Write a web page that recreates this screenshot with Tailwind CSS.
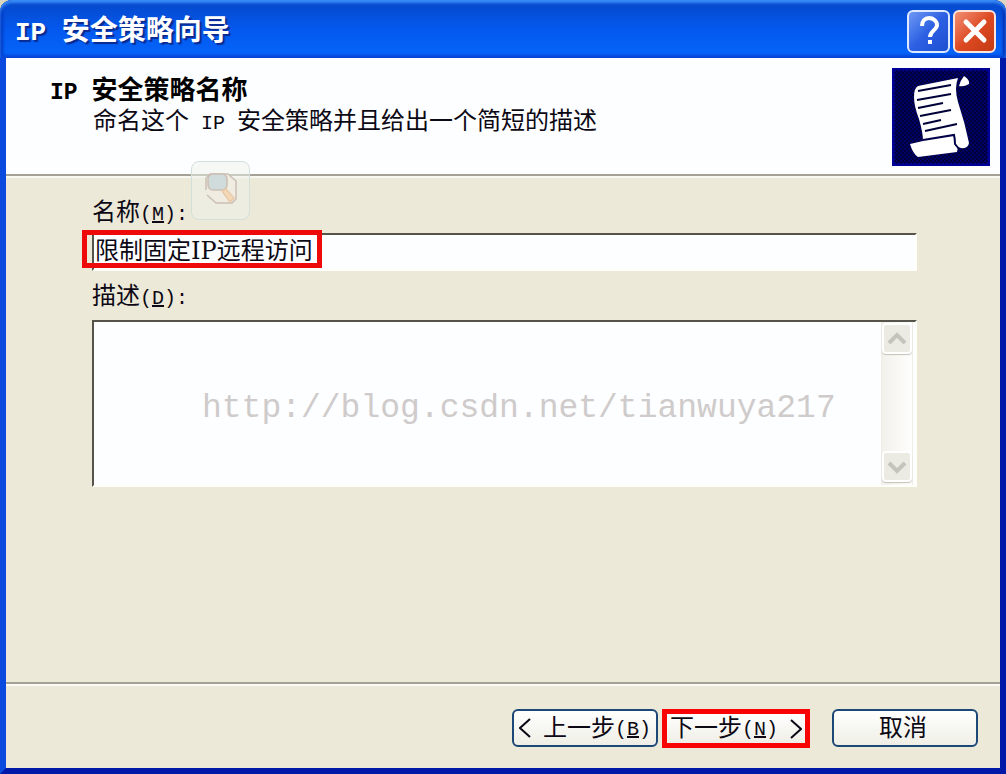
<!DOCTYPE html>
<html lang="zh-CN">
<head>
<meta charset="utf-8">
<meta name="viewport" content="width=device-width, initial-scale=1">
<title>IP 安全策略向导</title>
<script src="https://cdn.jsdelivr.net/npm/@tailwindcss/browser@4"></script>
</head>
<body class="bg-[#dcd8c0]">
<main class="flex min-h-screen flex-col font-['Liberation_Mono','Noto_Sans_CJK_SC',monospace] text-2xl leading-8 text-[#0c0814]">

  <!-- Title bar -->
  <header class="flex h-[58px] items-center justify-between rounded-t-xl bg-linear-to-b from-[#0548c8] via-[#0458ee] to-[#0566fb] pr-[10px] pl-[15px] shadow-[inset_0_3px_3px_#3a8cf8,inset_0_-3px_3px_#0446d8,inset_3px_0_3px_#0438c0,inset_-3px_0_3px_#0428a8]">
    <h1 class="pt-2 text-[28px] leading-8 font-bold whitespace-nowrap text-white [text-shadow:2px_2px_1px_#0a2a90]"><span class="text-[26px]">IP </span>安全策略向导</h1>
    <div class="flex gap-[3px] pt-1">
      <button type="button" aria-label="帮助" class="flex size-[43px] items-center justify-center rounded-md border-2 border-[#dfe9ff] bg-linear-to-br from-[#6f98f4] via-[#2c5fe2] to-[#1c50d0]">
        <svg class="size-9 shrink-0" viewBox="0 0 36 36" fill="none" stroke="#fff" stroke-width="4"><path d="M11 13c0-5 3-8 7-8s8 3 8 7c0 5-7 6-7 12"/><path d="M17 27h4v4h-4z" fill="#fff" stroke="none"/></svg>
      </button>
      <button type="button" aria-label="关闭" class="flex size-[43px] items-center justify-center rounded-md border-2 border-[#ffe4dc] bg-linear-to-br from-[#f08e72] via-[#dd4a22] to-[#c43a14]">
        <svg class="size-9 shrink-0" viewBox="0 0 36 36" fill="none" stroke="#fff" stroke-width="5" stroke-linecap="round"><path d="M9 9l18 18M27 9L9 27"/></svg>
      </button>
    </div>
  </header>

  <div class="relative flex flex-1 flex-col border-x-[6px] border-b-[6px] border-r-[#0018a8] border-b-[#0018a8] border-l-[#0a4ade] bg-[#ece9d8]">
    <!-- Page heading -->
    <section class="flex h-[118px] items-start justify-between border-b-2 border-[#a5a295] bg-[#fdfeff] pt-[10px] pr-[10px] pl-11 shadow-[0_2px_0_#f8f7f0]">
      <div class="pt-[9px] whitespace-nowrap">
        <h2 class="text-[26px] leading-[30px] font-bold text-black"><span class="text-[23px]">IP </span>安全策略名称</h2>
        <p class="pl-[43px] leading-[30px]">命名这个<span class="text-xl"> IP </span>安全策略并且给出一个简短的描述</p>
      </div>
      <svg class="size-[98px]" viewBox="0 0 98 98">
        <defs><pattern id="dots" width="4" height="4" patternUnits="userSpaceOnUse"><rect width="4" height="4" fill="#000038"/><path d="M0 0h2v2H0zM2 2h2v2H2z" fill="#000068"/></pattern></defs>
        <rect width="98" height="98" fill="url(#dots)"/>
        <path d="M1 1h96v96H1z" fill="none" stroke="#000098" stroke-width="3"/>
        <path d="M26 18L66 10Q62 20 66 34Q73 55 77 75Q76 81 69 80L66 79L65 84L26 89Q21 86 18 76L31 73Q31 65 27 51Q22 38 22 29Q22 20 26 18Z" fill="#fff"/>
        <path d="M72 8Q78 12 77 16Q72 19 67 18Q68 13 72 8Z" fill="#fff"/>
        <path d="M31 72L62 67Q63 71 63 76L67 81" fill="none" stroke="#000048" stroke-width="2"/>
        <path d="M26 23L59 17M25 32L59 26M26 40L51 35M28 48L59 42M31 56L49 52M33 63L65 56" stroke="#000038" stroke-width="2"/>
      </svg>
    </section>

    <!-- Form -->
    <form id="policy" class="flex flex-1 flex-col pt-[22px] pr-[83px] pl-[86px]">
      <label for="name" class="self-start whitespace-nowrap">名称<span class="text-xl">(<u>M</u>):</span></label>
      <div class="relative mt-[3px]">
        <input id="name" type="text" value="限制固定IP远程访问" class="block h-[38px] w-full border-2 border-t-[#55534a] border-r-[#fffffa] border-b-[#fffffa] border-l-[#55534a] bg-[#fdfeff] px-px pb-2 font-['DejaVu_Serif','Noto_Sans_CJK_SC',serif] text-2xl leading-6 outline-none">
        <span class="pointer-events-none absolute -top-[3px] -left-[10px] h-[38px] w-[240px] border-[5px] border-[#ee0a0a]"></span>
      </div>
      <label for="desc" class="mt-[11px] self-start whitespace-nowrap">描述<span class="text-xl">(<u>D</u>):</span></label>
      <div class="relative mt-[6px] flex h-[167px] border-2 border-t-[#55534a] border-r-[#fffffa] border-b-[#fffffa] border-l-[#55534a] bg-[#fdfeff]">
        <textarea id="desc" class="block min-w-0 flex-1 resize-none outline-none"></textarea>
        <div class="mr-[2px] flex w-8 flex-col justify-between border-x border-[#eeede6] bg-linear-to-r from-[#f2f1ec] to-[#fefefc] pt-px pb-[3px]">
          <button type="button" aria-label="向上滚动" class="flex h-[31px] items-center justify-center rounded-sm border-2 border-white bg-[#ebeae3] shadow-[0_1px_1px_#c4c3b8]"><svg class="size-5" viewBox="0 0 20 20" fill="none" stroke="#c4c3bc" stroke-width="4"><path d="M2 14l8-8 8 8"/></svg></button>
          <button type="button" aria-label="向下滚动" class="flex h-[31px] items-center justify-center rounded-sm border-2 border-white bg-[#ebeae3] shadow-[0_1px_1px_#c4c3b8]"><svg class="size-5" viewBox="0 0 20 20" fill="none" stroke="#c4c3bc" stroke-width="4"><path d="M2 6l8 8 8-8"/></svg></button>
        </div>
        <span class="pointer-events-none absolute top-[67px] left-[108px] text-[33px] leading-10 whitespace-nowrap text-[#cfcbcb]">http://blog.csdn.net/tianwuya217</span>
      </div>
    </form>

    <!-- Floating search badge -->
    <div class="absolute top-[103px] left-[185px] flex size-[59px] items-center justify-center rounded-lg border border-[#d2e0dc] bg-[#eef2ec]/50">
      <svg class="mb-1 size-9" viewBox="0 0 36 36" fill="none" stroke="#cbbfb4" stroke-width="1.5" stroke-linejoin="round"><path d="M3 19V7l4-4h18l8 7v18l-4 4H13l-9-8" fill="#f0ece2"/><rect x="5" y="3" width="19" height="16" rx="5" fill="#d0dcdc"/><path d="M19 20l4-2 8 9-4 4z" fill="#f4d8b8" stroke="#e6cba8"/></svg>
    </div>

    <!-- Wizard buttons -->
    <footer class="flex h-[86px] items-start justify-end border-t-2 border-[#a5a295] pt-[25px] pr-[22px] whitespace-nowrap shadow-[inset_0_2px_0_#fbfaf4]">
      <button type="button" class="flex h-[38px] w-[146px] items-center justify-center rounded-md border-2 border-[#1c4878] bg-linear-to-b from-white to-[#efeee6] pt-[3px]"><svg class="mr-3 mb-[3px] h-5 w-3 shrink-0" viewBox="0 0 12 20" fill="none" stroke="#0c0814" stroke-width="2"><path d="M11 1L1 10l10 9"/></svg>上一步<span class="text-xl">(<u>B</u>)</span></button>
      <button type="submit" form="policy" class="ml-1 flex h-[39px] w-[148px] items-center justify-center border-[5px] border-[#f80404] bg-linear-to-b from-white to-[#efeee6] pt-[3px]">下一步<span class="text-xl">(<u>N</u>)</span><svg class="mb-[3px] ml-3 h-5 w-3 shrink-0" viewBox="0 0 12 20" fill="none" stroke="#0c0814" stroke-width="2"><path d="M1 1l10 9-10 9"/></svg></button>
      <button type="button" class="ml-[22px] h-[38px] w-[146px] rounded-md border-2 border-[#1c4878] bg-linear-to-b from-white to-[#efeee6] pt-[3px] pr-1">取消</button>
    </footer>
  </div>
</main>
</body>
</html>
